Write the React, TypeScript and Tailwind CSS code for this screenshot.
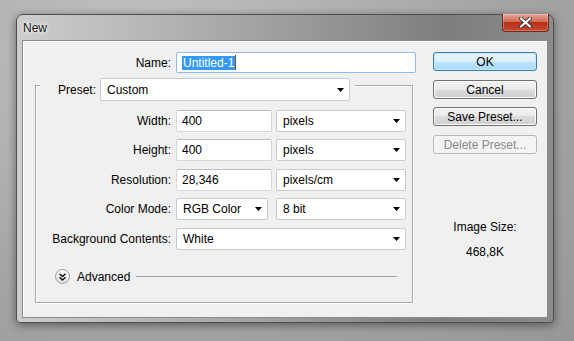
import React from 'react';

const font = "font-['Liberation_Sans',Arial,sans-serif]";

const Arrow: React.FC = () => (
  <svg width="7" height="4" viewBox="0 0 7 4" className="shrink-0">
    <path d="M0 0h7L3.5 4z" fill="#000" />
  </svg>
);

const Select: React.FC<{ value: string; width: string; height?: string }> = ({
  value,
  width,
  height = 'h-[22px]',
}) => (
  <div
    className={`${width} ${height} flex items-center justify-between rounded-[2px] border border-[#c8cbd0] bg-white pl-[6px] pr-[5px] text-black`}>
    <span>{value}</span>
    <Arrow />
  </div>
);

const TextBox: React.FC<{ value: string }> = ({ value }) => (
  <div className="flex h-[22px] w-[96px] items-center rounded-[2px] border border-[#d4d8de] border-t-[#b9bcc2] bg-white pl-[5px] text-black">
    {value}
  </div>
);

const Row: React.FC<{ label: string; mt: string; children: React.ReactNode }> = ({
  label,
  mt,
  children,
}) => (
  <div className={`flex items-center ${mt}`}>
    <span className="w-[135px] text-right text-black">{label}</span>
    <div className="ml-[5px] flex items-center">{children}</div>
  </div>
);

const Button: React.FC<{ label: string; kind?: 'default' | 'normal' | 'disabled'; mt?: string }> = ({
  label,
  kind = 'normal',
  mt = '',
}) => {
  const styles = {
    default:
      'border-[#3c7fb1] bg-[linear-gradient(#eaf6fd,#d9f0fc_50%,#bee6fd_50%,#a7d9f5)] text-black shadow-[inset_0_0_0_1px_#c4e5f6]',
    normal:
      'border-[#707070] bg-[linear-gradient(#f2f2f2,#ebebeb_50%,#dddddd_50%,#cfcfcf)] text-black shadow-[inset_0_0_0_1px_#fbfbfb]',
    disabled: 'border-[#b5b8bb] bg-[#f4f4f4] text-[#8a8a8a]',
  }[kind];
  return (
    <div
      className={`flex h-[19px] w-[104px] items-center justify-center rounded-[3px] border ${styles} ${mt}`}>
      {label}
    </div>
  );
};

const AdvancedIcon: React.FC = () => (
  <div className="flex h-[15px] w-[15px] items-center justify-center rounded-full border border-[#9a9a9a] bg-[linear-gradient(#ffffff,#e2e2e2)]">
    <svg width="7" height="8" viewBox="0 0 7 8">
      <path d="M0.5 0.8L3.5 3.5L6.5 0.8M0.5 4.3L3.5 7L6.5 4.3" fill="none" stroke="#111" strokeWidth="1.4" />
    </svg>
  </div>
);

const CloseButton: React.FC = () => (
  <div className="-mt-[1px] mr-[4px] flex h-[18px] w-[47px] items-center justify-center rounded-b-[4px] border border-t-0 border-[#6b2a20] bg-[linear-gradient(#e8a596,#d06a55_45%,#b8301b_50%,#c9462e)] shadow-[inset_0_0_0_1px_rgba(255,255,255,0.25)]">
    <svg width="13" height="11" viewBox="0 0 13 11">
      <path d="M2 1.5L11 9.5M11 1.5L2 9.5" stroke="#3a3a3a" strokeWidth="4" strokeLinecap="round" />
      <path d="M2 1.5L11 9.5M11 1.5L2 9.5" stroke="#ffffff" strokeWidth="2.2" strokeLinecap="round" />
    </svg>
  </div>
);

export default function App() {
  return (
    <div
      className={`${font} h-[341px] w-[574px] overflow-hidden bg-[radial-gradient(ellipse_at_25%_15%,#c2c2c2,#a7a7a7_55%,#979797)] pl-[16px] pt-[14px] text-[12px] leading-[14px]`}>
      <div className="flex h-[309px] w-[538px] flex-col rounded-t-[7px] rounded-b-[4px] border border-[#4e4e4e] bg-[linear-gradient(to_right,#cdcdcd,#b6b6b6_25%,#989898_55%,#7e7e7e_80%,#8c8c8c)] shadow-[0_2px_10px_rgba(0,0,0,0.45)]">
        {/* title bar */}
        <div className="flex h-[25px] shrink-0 items-start justify-between">
          <span className="pl-[6px] pt-[6px] text-[12px] text-[#141414] [text-shadow:0_0_6px_#fff,0_0_3px_#fff]">
            New
          </span>
          <CloseButton />
        </div>

        {/* client area */}
        <div className="ml-[5px] flex h-[278px] w-[526px] border border-[#8a8a8a] bg-[#f0f0f0] shadow-[inset_1px_1px_0_#fff]">
          {/* form column */}
          <div className="flex w-[397px] shrink-0 flex-col">
            <div className="mt-[11px] flex items-center">
              <span className="w-[148px] text-right text-black">Name:</span>
              <div className="ml-[5px] flex h-[21px] w-[240px] items-center rounded-[2px] border border-[#8fbce8] bg-white pl-[5px]">
                <span className="bg-[#3399ff] px-[1px] text-white">Untitled-1</span>
                <span className="h-[15px] w-[1px] bg-[#8a4a10]" />
              </div>
            </div>

            {/* group box */}
            <div className="ml-[12px] mt-[12px] flex h-[218px] w-[378px] flex-col border border-[#a9a9a9] shadow-[inset_1px_1px_0_#fff,1px_1px_0_#fff]">
              <div className="-mt-[8px] ml-[4px] flex w-fit items-center bg-[#f0f0f0] pr-[5px]">
                <span className="w-[56px] text-right text-black">Preset:</span>
                <div className="ml-[4px]">
                  <Select value="Custom" width="w-[250px]" height="h-[23px]" />
                </div>
              </div>

              <Row label="Width:" mt="mt-[9px]">
                <TextBox value="400" />
                <div className="ml-[4px]">
                  <Select value="pixels" width="w-[130px]" />
                </div>
              </Row>
              <Row label="Height:" mt="mt-[7px]">
                <TextBox value="400" />
                <div className="ml-[4px]">
                  <Select value="pixels" width="w-[130px]" />
                </div>
              </Row>
              <Row label="Resolution:" mt="mt-[8px]">
                <TextBox value="28,346" />
                <div className="ml-[4px]">
                  <Select value="pixels/cm" width="w-[130px]" />
                </div>
              </Row>
              <Row label="Color Mode:" mt="mt-[7px]">
                <Select value="RGB Color" width="w-[92px]" />
                <div className="ml-[8px]">
                  <Select value="8 bit" width="w-[130px]" />
                </div>
              </Row>
              <Row label="Background Contents:" mt="mt-[8px]">
                <Select value="White" width="w-[230px]" />
              </Row>

              <div className="ml-[19px] mr-[15px] mt-[19px] flex items-center">
                <AdvancedIcon />
                <span className="ml-[7px] text-black">Advanced</span>
                <div className="ml-[6px] h-[1px] flex-1 bg-[#a0a0a0]" />
              </div>
            </div>
          </div>

          {/* buttons column */}
          <div className="ml-[13px] flex w-[104px] flex-col items-center">
            <div className="mt-[11px]">
              <Button label="OK" kind="default" />
            </div>
            <Button label="Cancel" mt="mt-[9px]" />
            <Button label="Save Preset..." mt="mt-[8px]" />
            <Button label="Delete Preset..." kind="disabled" mt="mt-[9px]" />
            <span className="mt-[66px] text-black">Image Size:</span>
            <span className="mt-[11px] text-black">468,8K</span>
          </div>
        </div>
      </div>
    </div>
  );
}
